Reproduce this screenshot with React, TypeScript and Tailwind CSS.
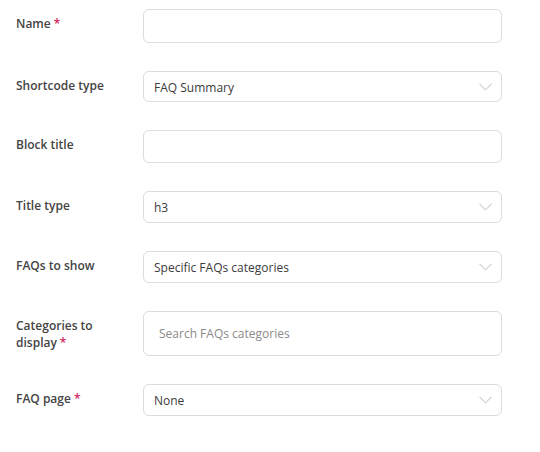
import React from 'react'

type Field = {
  label: string
  required?: boolean
  kind: 'text' | 'select' | 'search'
  value?: string
  placeholder?: string
  h: string
}

const fields: Field[] = [
  { label: 'Name', required: true, kind: 'text', h: 'h-[34px]' },
  { label: 'Shortcode type', kind: 'select', value: 'FAQ Summary', h: 'h-[31px]' },
  { label: 'Block title', kind: 'text', h: 'h-[33px]' },
  { label: 'Title type', kind: 'select', value: 'h3', h: 'h-[32px]' },
  { label: 'FAQs to show', kind: 'select', value: 'Specific FAQs categories', h: 'h-[32px]' },
  { label: 'Categories to display', required: true, kind: 'search', placeholder: 'Search FAQs categories', h: 'h-[45px]' },
  { label: 'FAQ page', required: true, kind: 'select', value: 'None', h: 'h-[32px]' },
]

function Chevron() {
  return (
    <svg width="13" height="8" viewBox="0 0 13 8" fill="none" className="shrink-0">
      <path d="M0.5 0.8 L6.5 6.8 L12.5 0.8" stroke="#cfcfcf" strokeWidth="1.1" />
    </svg>
  )
}

function Control({ field }: { field: Field }) {
  const base = `w-[359px] ${field.h} border border-[#dcdcde] rounded-[6px] bg-white`
  if (field.kind === 'text') {
    return <div className={base} />
  }
  if (field.kind === 'search') {
    return (
      <div className={`${base} flex items-center pl-[15px]`}>
        <span className="text-[12px] text-[#8a8a8a]">{field.placeholder}</span>
      </div>
    )
  }
  return (
    <div className={`${base} flex items-center justify-between pl-[10px] pr-[9px]`}>
      <span className="text-[12px] text-[#3c3c3c] pt-[2px]">{field.value}</span>
      <Chevron />
    </div>
  )
}

export default function App() {
  return (
    <div
      className="w-[540px] h-[452px] bg-white pl-4 pt-[9px] flex flex-col gap-[28px]"
      style={{ fontFamily: '"Open Sans", "Noto Sans", sans-serif' }}
    >
      {fields.map((f) => (
        <div key={f.label} className="flex items-start">
          <label className="w-[127px] shrink-0 pt-[6px] pr-4 text-[12px] leading-[17px] font-semibold text-[#444444]">
            {f.label === 'Categories to display' ? (
              <>
                Categories to
                <br />
                display
              </>
            ) : (
              f.label
            )}
            {f.required && <span className="text-[#d0245e] ml-[3px]">*</span>}
          </label>
          <Control field={f} />
        </div>
      ))}
    </div>
  )
}
